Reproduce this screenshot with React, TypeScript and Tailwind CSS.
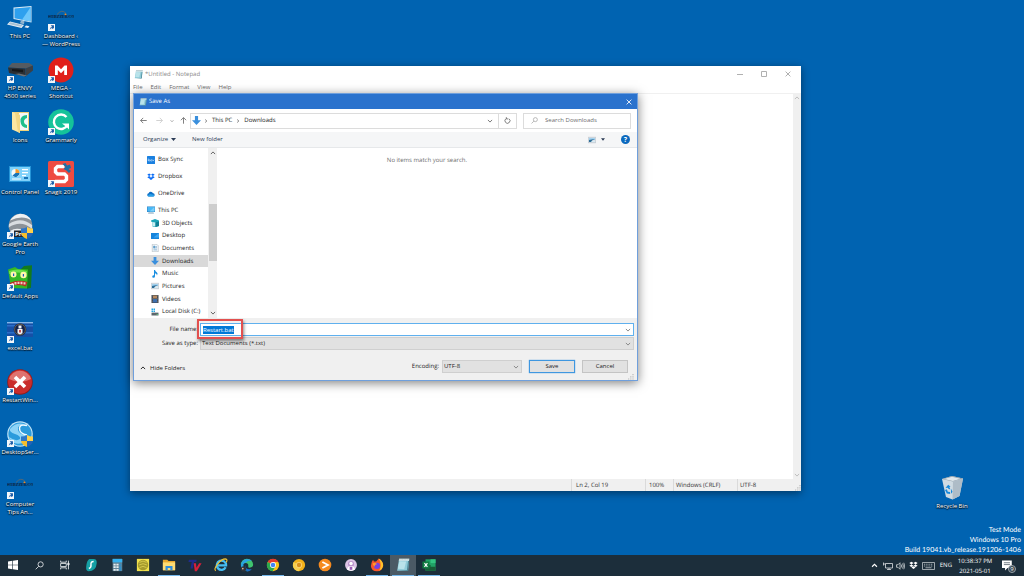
import { useEffect, useRef } from "react";
import type { ReactNode } from "react";

/* ---------- shared small glyphs ---------- */

type GlyphProps = { className?: string };

const Chevron = ({ className = "" }: GlyphProps) => (
  <svg viewBox="0 0 10 10" className={className} fill="none" stroke="currentColor" strokeWidth="1.6">
    <path d="M1.5 3.2 5 6.8 8.5 3.2" />
  </svg>
);

const Caret = ({ className = "" }: GlyphProps) => (
  <svg viewBox="0 0 10 6" className={className} fill="currentColor">
    <path d="M0 0h10L5 6z" />
  </svg>
);

const Cross = ({ className = "" }: GlyphProps) => (
  <svg viewBox="0 0 10 10" className={className} fill="none" stroke="currentColor" strokeWidth="1.4">
    <path d="M1 1l8 8M9 1 1 9" />
  </svg>
);

const Magnifier = ({ className = "" }: GlyphProps) => (
  <svg viewBox="0 0 16 16" className={className} fill="none" stroke="currentColor" strokeWidth="1.5">
    <circle cx="10" cy="6" r="4.6" />
    <path d="M6.6 9.4 1.2 14.8" />
  </svg>
);

const Grip = ({ className = "" }: GlyphProps) => (
  <svg viewBox="0 0 6 6" className={className} fill="#b9b9b9">
    <path d="M4.4 0h1.2v1.2H4.4zM4.4 2.2h1.2v1.2H4.4zM4.4 4.4h1.2v1.2H4.4zM2.2 2.2h1.2v1.2H2.2zM2.2 4.4h1.2v1.2H2.2zM0 4.4h1.2v1.2H0z" />
  </svg>
);

const NotepadIcon = ({ className = "" }: GlyphProps) => (
  <svg viewBox="0 0 18 18" className={className}>
    <path d="M4 1h13l-1.500 15.500H1.500z" fill="#8fcbd8" />
    <path d="M4 1h13l-.3 2.600H3.600z" fill="#d9e6e8" />
    <path d="M4.300 4.200 13 4.500l-2.500 10-8-.6z" fill="#b9e3ea" />
    <path d="M15.500 3.800h1.300L15.500 16.800H4l10-1z" fill="#4b8796" />
    <path d="M4 1h13" stroke="#7c8b8e" strokeWidth="1" strokeDasharray="1 1" />
  </svg>
);

const DownArrow = ({ className = "" }: GlyphProps) => (
  <svg viewBox="0 0 16 16" className={className}>
    <path d="M5.200 0h5.600v7.500H16L8 16 0 7.500h5.200z" fill="#3a8fdc" />
  </svg>
);

const PcIcon = ({ className = "" }: GlyphProps) => (
  <svg viewBox="0 0 16 16" className={className}>
    <path d="M0 1h16v11H0z" fill="#2a7fc0" />
    <path d="M1 2h14v9H1z" fill="#49b7f5" />
    <path d="M15 2v9H5z" fill="#7cd0fa" />
    <path d="M3 13h10l1 2H2z" fill="#7d9db5" />
  </svg>
);

const DropboxIcon = ({ className = "" }: GlyphProps) => (
  <svg viewBox="0 0 16 16" className={className} fill="currentColor">
    <path d="M4.300 1.200.6 3.600l3.700 2.400L8 3.600zM11.700 1.200 8 3.600 11.700 6l3.700-2.400zM.6 8.400l3.700 2.400L8 8.400 4.300 6zM11.700 6 8 8.400l3.700 2.400 3.700-2.400zM4.300 11.600 8 14l3.700-2.400L8 9.200z" />
  </svg>
);

const ShieldIcon = ({ className = "" }: GlyphProps) => (
  <svg viewBox="0 0 12 12" className={className}>
    <path d="M0 1.500Q3.500 1.500 6 0v6H0z" fill="#2e77c8" />
    <path d="M12 1.500Q8.500 1.500 6 0v6h6z" fill="#ffd14a" />
    <path d="M0 6h6v6Q.8 10 0 6z" fill="#f7bf2c" />
    <path d="M12 6H6v6q5.200-2 6-6z" fill="#2563b4" />
  </svg>
);

const PictureIcon = ({ className = "" }: GlyphProps) => (
  <svg viewBox="0 0 16 16" className={className}>
    <path d="M.5 2.500h15v11H.5z" fill="#dde3e8" stroke="#a8b4be" />
    <path d="M2 4h12v4H2z" fill="#a5d2ef" />
    <path d="M2 8l5-1 7-1-6 3-1 3H2z" fill="#2f6f98" />
    <path d="M7 10h7v2H7z" fill="#d6ecf5" />
  </svg>
);

/* ---------- desktop ---------- */

const SiteLogo = () => (
  <svg viewBox="0 0 26 26" className="size-[26px]">
    <path d="M9 9.500q5-6 9-1" fill="none" stroke="#7a6a5c" strokeWidth=".7" />
    <circle cx="17.500" cy="9.500" r="1" fill="#f28a1e" />
    <path d="M0 11h26" stroke="#16385c" strokeWidth=".4" />
    <text x="13" y="13" textAnchor="middle" fontSize="4" fontWeight="700" fontFamily="Liberation Serif, serif" fill="#0d2340">
      WEBZZER.CO
    </text>
  </svg>
);

const DesktopPc = () => (
  <svg viewBox="0 0 26 26" className="size-[26px]">
    <path d="M6.500 2.500 24.500 1v16.500L6.500 14z" fill="#dcebf5" />
    <path d="M7.500 3.400 23.700 2v14.500L7.500 13.200z" fill="#2ea0ee" />
    <path d="M23.700 2v14.500L15 14.800z" fill="#6cc6fb" />
    <path d="m14 15.500 3.500.8-.6 3L13 18.200z" fill="#8fb2cc" />
    <path d="m3 16.500 14 3.500-2.500 3L0 19.500z" fill="#e6eff6" />
    <path d="m3.500 17.300 12 3-1.500 1.500L1.500 19z" fill="#a9c2d4" />
    <path d="m19 20.500 3.500.8-1.500 1.700-3.500-.8z" fill="#e6eff6" />
  </svg>
);

const Printer = () => (
  <svg viewBox="0 0 26 26" className="size-[26px]">
    <path d="M1 10.500 5 6h17l4 2.500-7 3z" fill="#555b61" />
    <path d="m1 10.500 17.500 1v8L2 16z" fill="#2b2f34" />
    <path d="M18.500 11.500 26 8.500v5l-7.500 6z" fill="#3b4046" />
    <path d="m5 12 11 .8v2.400L5 14z" fill="#15181b" />
    <path d="m8 17 9 2.500 3-1-8-2z" fill="#6b7278" />
  </svg>
);

const FolderIcons = () => (
  <svg viewBox="0 0 26 26" className="size-[26px]">
    <path d="M5 3h17v19H9z" fill="#f0d27a" />
    <path d="M12 4h9v17h-9z" fill="#f5f7f7" />
    <path d="M20 6q-7 0-6.500 6.500T20 19v-3q-3-1-3-3.500T20 9z" fill="#1fbf8c" />
    <path d="m5 3 8 3v18l-8-3.500z" fill="#fbe7a3" />
    <path d="m8 4 5 2v18l-2-1z" fill="#f3d783" />
  </svg>
);

const ControlPanel = () => (
  <svg viewBox="0 0 26 26" className="size-[26px]">
    <path d="M2 5h22v16H2z" fill="#2595d8" />
    <path d="M3 6h20v14H3z" fill="#7fd1fa" />
    <circle cx="8.500" cy="12" r="4" fill="#f5fafc" />
    <path d="M8.500 12V8a4 4 0 0 1 4 4z" fill="#f29a2e" />
    <path d="M8.500 12h4a4 4 0 0 1-7 2.600z" fill="#1874b8" />
    <path d="M15 8h6v1.200h-6zM15 11h6v1.200h-6zM15 14h4v1.200h-4zM5 17.500h9v1H5z" fill="#fff" />
    <path d="M17 16h4v2h-4z" fill="#1874b8" />
  </svg>
);

const EarthPro = () => (
  <svg viewBox="0 0 26 26" className="size-[26px]">
    <circle cx="13.500" cy="12.500" r="11.800" fill="#8c9298" />
    <path d="M3 7.500Q7 1.500 13 .8q8 0 11.500 7Q16 1.500 3 7.500z" fill="#eef1f3" />
    <path d="M2 11q12-8 23 1l.2 4Q14 6.500 1.700 14.500z" fill="#d9dde0" />
    <path d="M3 18q9-6 19 3.500l-3 2.300Q14 19 6 21.800z" fill="#eceff1" />
    <path d="M7 17.500h11V24H7z" fill="#23272b" />
    <text x="8" y="22.800" fontSize="6" fontWeight="700" fontFamily="Open Sans, sans-serif" fill="#fff">
      Pro
    </text>
  </svg>
);

const GreenMonster = () => (
  <svg viewBox="0 0 26 26" className="size-[26px]">
    <path d="m14 4 3-3 8-.8-1 22.500-4 1z" fill="#137a1c" />
    <path d="M1 4.500 8 2l3 2 10 .5-1 19-16-.5z" fill="#35b824" />
    <path d="M2 6q8-3 18 0l-.4 3Q11 6 2.200 9z" fill="#6be04a" />
    <circle cx="6.500" cy="9.500" r="3" fill="#fff7ac" />
    <circle cx="16.500" cy="10" r="3.200" fill="#fff7ac" />
    <path d="M6 8.500h1.200v2.500H6zM15.800 9H17v2.500h-1.200z" fill="#1b55c4" />
    <path d="M2.500 18q8.500-4 18-1l-1.500 4.500Q11 19 4 21z" fill="#b92d23" />
    <path d="M4.500 18h2v2h-2zM7.500 17h2v2.400h-2zM10.500 16.700h2v2.400h-2zM13.500 16.700h2v2.600h-2zM16.500 17.200h2v2.400h-2z" fill="#f3c9c4" />
  </svg>
);

const SealFlag = () => (
  <svg viewBox="0 0 26 26" className="size-[26px]">
    <path d="M0 5h26v15H0z" fill="#1650a6" />
    <path d="M0 5h26v1.400H0z" fill="#82b5e8" />
    <path d="M0 8h26v1.500H0zM0 15h26v1.500H0z" fill="#2b6fc8" />
    <circle cx="13" cy="12.500" r="6.300" fill="#13224a" />
    <circle cx="13" cy="12.500" r="5.400" fill="none" stroke="#b89b4b" strokeWidth=".5" />
    <path d="M10.500 12h5v4.200L13 17.500l-2.500-1.300zM11.500 8.500h3v3h-3z" fill="#f3f4f6" />
    <path d="M12.200 13h1.600v2.500h-1.600z" fill="#b82a2a" />
  </svg>
);

const RedCross = () => (
  <svg viewBox="0 0 26 26" className="size-[26px]">
    <circle cx="13" cy="13" r="12.800" fill="#8f1d1d" />
    <circle cx="13" cy="12.800" r="12" fill="#c92d2c" />
    <path d="M2 10a11.500 11.500 0 0 1 22 0q-11 6-22 0z" fill="#df7370" />
    <path d="m8 8 10 10M18 8 8 18" stroke="#fff" strokeWidth="3.600" />
  </svg>
);

const SwirlGlobe = () => (
  <svg viewBox="0 0 26 26" className="size-[26px]">
    <circle cx="13" cy="13" r="12.800" fill="#bfe3f6" />
    <circle cx="13" cy="13" r="11.600" fill="#2b9bdc" />
    <path d="M3 8q6-7 14-5-7 1-6 6 1 4 7 5 3 3-2 8Q5 25 2 16q7 5 11 2 1-3-5-5T3 8z" fill="#8ed4f7" />
    <path d="M20 4.500Q12.500 2.500 12.500 7.500T20 14" fill="none" stroke="#f3fbff" strokeWidth="1.400" />
  </svg>
);

const Mega = () => (
  <svg viewBox="0 0 26 26" className="size-[26px]">
    <circle cx="13" cy="13" r="12.500" fill="#e0201b" />
    <path d="M7 18V8.500h2.500L13 12.300l3.500-3.800H19V18h-2.800v-5L13 16.300 9.800 13v5z" fill="#fff" />
  </svg>
);

const Grammarly = () => (
  <svg viewBox="0 0 26 26" className="size-[26px]">
    <circle cx="13" cy="13" r="12.800" fill="#15c39a" />
    <path d="M18.500 8A7.200 7.200 0 1 0 19.500 16" fill="none" stroke="#fff" strokeWidth="2.400" />
    <path d="M14 14.500h7v6l-2.200-2.200z" fill="#fff" />
  </svg>
);

const Snagit = () => (
  <svg viewBox="0 0 26 26" className="size-[26px]">
    <rect width="26" height="26" rx="1.500" fill="#ee4b42" />
    <path d="M16.500 5.500H9.500L7.500 7.500V11l2 2h7l2 2v3.500l-2 2H7" fill="none" stroke="#fff" strokeWidth="3.400" />
    <path d="m14.500 3 3-1 1.500 2.500 3-1L23 7l-2.500 1 2.500 2-2 2-2.500-2.500L15.500 8l2-2z" fill="#1d6fa6" />
  </svg>
);

const RecycleBin = () => (
  <svg viewBox="0 0 26 26" className="size-[26px]">
    <path d="m3 4 10-3 11 2.500L20.500 21l-7 3.500L7 22z" fill="#cfdbe3" />
    <path d="m3 4 10-3 11 2.500-10 3z" fill="#8f9da8" />
    <path d="m5 4 8-2.300 8.500 2-7.600 2.200z" fill="#dfe7ec" />
    <path d="m14 6.500 10-3L20.500 21l-7 3.500z" fill="#aebcc7" />
    <path d="m6.500 13 2.700-3.200 2.400 2-1.200.2 1 2.400-2-.6-.6-1zM6 15l1.800-.8 1 2.600 2.200.2.200 2-3.400-.4zM12 13.800l1.500 3-1.300 2-.2-1.300z" fill="#1689dc" />
  </svg>
);

type Shortcut = { label: string; icon: ReactNode; linked?: boolean; shield?: boolean };

const firstColumn: Shortcut[] = [
  { label: "This PC", icon: <DesktopPc /> },
  { label: "HP ENVY\n4500 series", icon: <Printer />, linked: true },
  { label: "Icons", icon: <FolderIcons /> },
  { label: "Control Panel", icon: <ControlPanel /> },
  { label: "Google Earth\nPro", icon: <EarthPro />, linked: true, shield: true },
  { label: "Default Apps", icon: <GreenMonster />, linked: true },
  { label: "excel.bat", icon: <SealFlag />, linked: true },
  { label: "RestartWin...", icon: <RedCross />, linked: true },
  { label: "DesktopSer...", icon: <SwirlGlobe />, linked: true, shield: true },
  { label: "Computer\nTips An...", icon: <SiteLogo />, linked: true },
];

const secondColumn: Shortcut[] = [
  { label: "Dashboard ‹\n— WordPress", icon: <SiteLogo />, linked: true },
  { label: "MEGA -\nShortcut", icon: <Mega />, linked: true },
  { label: "Grammarly", icon: <Grammarly />, linked: true },
  { label: "Snagit 2019", icon: <Snagit />, linked: true },
];

function DesktopItem({ label, icon, linked, shield }: Shortcut) {
  return (
    <button type="button" className="flex h-[52px] w-10 flex-col items-center pt-[5px]">
      <span className="relative block size-[26px]">
        {icon}
        {linked && (
          <svg viewBox="0 0 8 8" className="absolute bottom-0 left-0 size-[7px]">
            <path d="M0 0h8v8H0z" fill="#f4f7fa" />
            <path d="M2 6.500Q2 3.500 4.500 3.300V1.800L6.800 4 4.500 6V4.700Q3 4.700 2 6.500z" fill="#1d5ea8" />
            <path d="M3 1.500h3.800v3.800z" fill="#1d5ea8" />
          </svg>
        )}
        {shield && <ShieldIcon className="absolute right-0 bottom-0 size-3" />}
      </span>
      <span className="mt-px text-center leading-2 whitespace-pre text-white [text-shadow:0_1px_1px_#000,0_0_2px_#000]">
        {label}
      </span>
    </button>
  );
}

/* ---------- notepad ---------- */

function Notepad() {
  return (
    <section
      aria-label="Notepad"
      className="absolute top-[66px] left-[130px] flex h-[425px] w-[671px] flex-col bg-white text-[#8a8a8a] shadow-[0_2px_8px_rgba(0,0,0,0.45)]"
    >
      <header className="flex h-4 items-center pr-px pl-1">
        <NotepadIcon className="size-[9px]" />
        <h1 className="ml-[2px] flex-1">*Untitled - Notepad</h1>
        <button type="button" aria-label="Minimize" className="grid w-6 place-items-center text-[#b0b0b0]">
          <svg viewBox="0 0 6 6" className="size-[6px]" stroke="currentColor"><path d="M0 3.500h6" /></svg>
        </button>
        <button type="button" aria-label="Maximize" className="grid w-6 place-items-center text-[#b0b0b0]">
          <svg viewBox="0 0 6 6" className="size-[6px]" fill="none" stroke="currentColor"><path d="M.5.5h5v5h-5z" /></svg>
        </button>
        <button type="button" aria-label="Close" className="grid w-6 place-items-center text-[#a0a0a0]">
          <Cross className="size-[6px]" />
        </button>
      </header>
      <nav className="flex h-[11px] items-center gap-2 pl-[3px] text-[#6b6b6b]">
        {["File", "Edit", "Format", "View", "Help"].map((m) => (
          <button type="button" key={m}>{m}</button>
        ))}
      </nav>
      <div className="flex min-h-0 flex-1 border-t border-[#f0f0f0]">
        <textarea aria-label="Document" className="flex-1 resize-none outline-none" />
        <div className="flex w-2 flex-col items-center justify-between bg-[#f0f0f0] py-px text-[#bcbcbc]">
          <Chevron className="size-[6px] rotate-180" />
          <Chevron className="size-[6px]" />
        </div>
      </div>
      <footer className="flex h-3 items-stretch bg-[#f0f0f0] leading-3 text-[#333]">
        <span className="ml-auto w-[74px] border-l border-[#dadada] pl-1">Ln 2, Col 19</span>
        <span className="w-7 border-l border-[#dadada] pl-[3px]">100%</span>
        <span className="w-16 border-l border-[#dadada] pl-[2px]">Windows (CRLF)</span>
        <span className="w-[58px] border-l border-[#dadada] pl-[2px]">UTF-8</span>
        <Grip className="size-[6px] self-end" />
      </footer>
    </section>
  );
}

/* ---------- save dialog ---------- */

type Place = { label: string; icon: ReactNode };

const cloudPlaces: Place[] = [
  {
    label: "Box Sync",
    icon: (
      <svg viewBox="0 0 16 16" className="size-2">
        <rect width="16" height="16" rx="1" fill="#1a80e0" />
        <g fill="none" stroke="#cfe6fa" strokeWidth="1.200">
          <path d="M2.500 5v4.500" /><circle cx="4.300" cy="8.800" r="1.500" /><circle cx="8.500" cy="8.800" r="1.500" />
          <path d="m11 7.300 3 3M14 7.300l-3 3" />
        </g>
      </svg>
    ),
  },
  { label: "Dropbox", icon: <DropboxIcon className="size-2 text-[#0a6cf5]" /> },
  {
    label: "OneDrive",
    icon: (
      <svg viewBox="0 0 16 16" className="size-2">
        <path d="M3.500 13a3.400 3.400 0 0 1-.3-6.700A4.800 4.800 0 0 1 12 6.500a3.300 3.300 0 0 1 .8 6.500z" fill="#0f6fc6" />
        <path d="m6 8 7.500 1.500q2 2.500-.7 3.500H3.500q-2 0-2.800-1.500z" fill="#28a0e8" />
      </svg>
    ),
  },
];

const pcPlaces: Place[] = [
  {
    label: "3D Objects",
    icon: (
      <svg viewBox="0 0 16 16" className="size-2">
        <path d="M0 3 8 0l8 3v11l-7 2-6-1V6L0 5z" fill="#1aa5b8" />
        <path d="m3 6 6 1v8l-6-1z" fill="#c9eff4" />
        <path d="m9 7 7-2v9l-7 2z" fill="#0f7f95" />
      </svg>
    ),
  },
  {
    label: "Desktop",
    icon: (
      <svg viewBox="0 0 16 16" className="size-2">
        <path d="M0 2h16v12H0z" fill="#1684dc" />
        <path d="M16 2v9H5z" fill="#3aa5f2" />
      </svg>
    ),
  },
  {
    label: "Documents",
    icon: (
      <svg viewBox="0 0 16 16" className="size-2">
        <path d="M2.500.5h9l3 3v12h-12z" fill="#f5f8fa" stroke="#9aa7b1" />
        <path d="M5 4h3v4H5zM9 5h3M9 7h3M5 10h7M5 12h7" fill="#6aa7cf" stroke="#5f9bc6" />
      </svg>
    ),
  },
  { label: "Downloads", icon: <DownArrow className="size-2" /> },
  {
    label: "Music",
    icon: (
      <svg viewBox="0 0 16 16" className="size-2">
        <path d="M6 0h2q.5 3 3.500 4.500T12 11q-.3-3.500-4-4.500v6q0 3-3 3t-2.500-2.500Q3 10.500 6 10.700z" fill="#1c8fe0" />
      </svg>
    ),
  },
  { label: "Pictures", icon: <PictureIcon className="size-2" /> },
  {
    label: "Videos",
    icon: (
      <svg viewBox="0 0 16 16" className="size-2">
        <path d="M1 0h14v16H1z" fill="#3d4248" />
        <path d="M4 1h8v6H4z" fill="#b58a62" /><path d="M4 8h8v7H4z" fill="#3c6fae" />
        <path d="M2.400 0v16M13.600 0v16" stroke="#b8bdc2" strokeWidth=".9" strokeDasharray="1.500 1.500" />
      </svg>
    ),
  },
  {
    label: "Local Disk (C:)",
    icon: (
      <svg viewBox="0 0 16 16" className="size-2">
        <path d="M1 1h3v3H1zM5 1h3v3H5zM1 5h3v3H1zM5 5h3v3H5z" fill="#22a6e4" />
        <path d="M1 9.500h14V15H1z" fill="#5d666d" />
        <path d="M1 9.500 3 8h10l2 1.500z" fill="#b7c0c6" />
        <path d="M11 12h3v1.300h-3z" fill="#55e07c" />
      </svg>
    ),
  },
];

function SaveDialog() {
  const nameRef = useRef<HTMLInputElement>(null);
  useEffect(() => {
    nameRef.current?.focus();
    nameRef.current?.select();
  }, []);

  return (
    <section
      role="dialog"
      aria-label="Save As"
      className="absolute top-[93px] left-[133px] flex h-[288px] w-[505px] flex-col border border-[#6f9fdc] bg-white text-[#222] shadow-[0_2px_10px_rgba(0,0,0,0.5)]"
    >
      <header className="flex h-[15px] items-center bg-[#2a72cd] px-[5px] text-white">
        <NotepadIcon className="size-2" />
        <h2 className="ml-[2px] flex-1">Save As</h2>
        <button type="button" aria-label="Close dialog"><Cross className="size-[6px]" /></button>
      </header>

      <div className="flex h-[23px] items-center pr-[6px] pl-[6px] text-[#777]">
        <button type="button" aria-label="Back">
          <svg viewBox="0 0 12 12" className="size-[7px]" fill="none" stroke="currentColor" strokeWidth="1.600"><path d="M11.500 6H1M5.500 1.500 1 6l4.500 4.500" /></svg>
        </button>
        <button type="button" aria-label="Forward" className="ml-[9px] text-[#cfcfcf]">
          <svg viewBox="0 0 12 12" className="size-[7px]" fill="none" stroke="currentColor" strokeWidth="1.600"><path d="M.5 6H11M6.500 1.500 11 6l-4.500 4.500" /></svg>
        </button>
        <button type="button" aria-label="Recent locations" className="ml-[7px]"><Chevron className="size-1" /></button>
        <button type="button" aria-label="Up one level" className="ml-[6px]">
          <svg viewBox="0 0 12 12" className="size-[7px]" fill="none" stroke="currentColor" strokeWidth="1.600"><path d="M6 11.500V1M1.500 5.500 6 1l4.500 4.500" /></svg>
        </button>
        <div className="ml-[3px] flex h-4 flex-1 items-center border border-[#dcdcdc] pl-px text-[#222]">
          <DownArrow className="size-[9px]" />
          <Chevron className="ml-[3px] size-1 -rotate-90" />
          <span className="ml-1">This PC</span>
          <Chevron className="mx-1 size-1 -rotate-90" />
          <span>Downloads</span>
          <button type="button" aria-label="Previous locations" className="mr-[5px] ml-auto text-[#777]"><Chevron className="size-[6px]" /></button>
          <button type="button" aria-label="Refresh" className="grid h-full w-[18px] place-items-center border-l border-[#dcdcdc]">
            <svg viewBox="0 0 12 12" className="size-[7px]" fill="none" stroke="#666" strokeWidth="1.400"><path d="M8.500 3A4.300 4.300 0 1 1 4 2.600M4 .3v3h3.200" /></svg>
          </button>
        </div>
        <div className="ml-[6px] flex h-4 w-[108px] items-center border border-[#dcdcdc] pl-[7px] text-[#999]">
          <Magnifier className="size-[7px]" />
          <input
            type="search"
            aria-label="Search Downloads"
            placeholder="Search Downloads"
            className="ml-[7px] min-w-0 flex-1 outline-none placeholder:text-[#6d6d6d]"
          />
        </div>
      </div>

      <div className="flex h-4 items-center border-b border-[#e6e8ea] bg-[#f5f6f7] pr-[7px] pl-[9px] text-[#2b3b55]">
        <button type="button" className="flex items-center gap-[3px]">
          Organize <Caret className="h-[3px] w-[5px]" />
        </button>
        <button type="button" className="ml-4">New folder</button>
        <button type="button" aria-label="Change view" className="ml-auto flex items-center gap-[5px]">
          <PictureIcon className="size-2" />
          <Caret className="h-[3px] w-1" />
        </button>
        <button type="button" aria-label="Help" className="ml-4 grid size-[9px] place-items-center rounded-full bg-[#0b69be] text-[7px] leading-none font-bold text-white">
          ?
        </button>
      </div>

      <div className="flex min-h-0 flex-1">
        <nav className="flex w-[74px] flex-col justify-between pt-[3px]">
          <ul>
            {cloudPlaces.map((p) => (
              <li key={p.label} className="flex h-[17px] items-center gap-[3px] pl-[13px]">
                {p.icon}{p.label}
              </li>
            ))}
          </ul>
          <ul className="mt-[2px] flex flex-1 flex-col">
            <li className="flex min-h-0 flex-1 items-center gap-[3px] pl-[13px]">
              <PcIcon className="size-2" />This PC
            </li>
            {pcPlaces.map((p) => (
              <li
                key={p.label}
                className={`flex min-h-0 flex-1 items-center gap-[3px] pl-[17px] whitespace-nowrap ${p.label === "Downloads" ? "bg-[#d9d9d9]" : ""}`}
              >
                {p.icon}{p.label}
              </li>
            ))}
          </ul>
        </nav>
        <div className="flex w-[9px] flex-col items-center bg-[#f0f0f0] pt-[2px] pb-[2px] text-[#606060]">
          <Chevron className="size-[6px] rotate-180" />
          <div className="mt-12 h-[57px] w-2 bg-[#cdcdcd]" />
          <Chevron className="mt-auto size-[6px]" />
        </div>
        <p className="flex-1 pt-2 text-center leading-2 text-[#6d6d6d]">No items match your search.</p>
      </div>

      <form className="flex h-[62px] flex-col bg-[#f0f0f0] pt-[5px] pr-[3px]" onSubmit={(e) => e.preventDefault()}>
        <div className="flex items-center">
          <label htmlFor="name" className="w-[66px] pr-[2px] text-right">File name:</label>
          <div className="flex h-[13px] flex-1 items-center border border-[#5fb0ee] bg-white pr-[2px] pl-[2px]">
            <input
              id="name"
              ref={nameRef}
              defaultValue="Restart.bat"
              className="h-2 min-w-0 flex-1 leading-2 outline-none selection:bg-[#0078d7] selection:text-white"
            />
            <Chevron className="size-[6px] text-[#888]" />
          </div>
        </div>
        <div className="mt-px flex items-center">
          <label htmlFor="type" className="w-[66px] pr-[2px] text-right">Save as type:</label>
          <div className="relative flex h-[13px] flex-1 items-center border border-[#cfcfcf] bg-[#e1e1e1]">
            <select id="type" className="h-full w-full appearance-none pl-px outline-none">
              <option>Text Documents (*.txt)</option>
            </select>
            <Chevron className="pointer-events-none absolute right-[2px] size-[6px] text-[#888]" />
          </div>
        </div>
        <div className="mt-[10px] flex items-center pr-[6px] pl-[6px]">
          <button type="button" className="flex items-center gap-1 pt-[3px]">
            <Chevron className="size-[6px] rotate-180" />Hide Folders
          </button>
          <label htmlFor="encoding" className="ml-auto pr-[3px]">Encoding:</label>
          <div className="relative flex h-[13px] w-[80px] items-center border border-[#cfcfcf] bg-[#e1e1e1]">
            <select id="encoding" className="h-full w-full appearance-none pl-px outline-none">
              <option>UTF-8</option>
            </select>
            <Chevron className="pointer-events-none absolute right-[2px] size-[6px] text-[#888]" />
          </div>
          <button type="submit" className="ml-[7px] h-[13px] w-[46px] border border-[#3f97e0] bg-[#e1e1e1] shadow-[0_0_1px_#3f97e0]">
            Save
          </button>
          <button type="button" className="ml-[7px] h-[13px] w-[46px] border border-[#c4c4c4] bg-[#e1e1e1]">Cancel</button>
        </div>
        <Grip className="mt-auto size-[6px] self-end" />
      </form>

      <div className="pointer-events-none absolute top-[225px] left-[63px] h-[20px] w-[46px] border-2 border-[#e2504f] shadow-[1px_2px_3px_rgba(0,0,0,0.45)]" />
    </section>
  );
}

/* ---------- taskbar ---------- */

type App = { name: string; icon: ReactNode; open?: boolean; active?: boolean };

const taskIcon = "size-[14px]";

const apps: App[] = [
  { name: "Start", icon: <svg viewBox="0 0 16 16" className="size-[10px]" fill="#fff"><path d="M0 2.300 7 1.300v6.200H0zM8 1.200 16 0v7.500H8zM0 8.500h7v6.200l-7-1zM8 8.500h8V16l-8-1.200z" /></svg> },
  { name: "Search", icon: <Magnifier className="size-[9px] text-[#e6e9eb]" /> },
  {
    name: "Task View",
    icon: (
      <svg viewBox="0 0 16 16" className="size-[10px]" fill="none" stroke="#e6e9eb" strokeWidth="1.400">
        <path d="M1 1v2.500h9V1M1 15v-2.500h9V15M1 5.500h9v5H1zM13.500 1v14" /><path d="M12.500 5h2v3h-2z" fill="#e6e9eb" />
      </svg>
    ),
  },
  {
    name: "Surfshark",
    icon: (
      <svg viewBox="0 0 16 16" className={taskIcon}>
        <path d="M6 1h5q4 0 3.500 5Q14 15 5 15q-3 0-2.500-5Q3 3 6 1z" fill="#16a0a5" />
        <path d="M11 4Q7.500 4 8 7.500T5.500 12" fill="none" stroke="#fff" strokeWidth="1.600" />
      </svg>
    ),
  },
  {
    name: "Calculator",
    icon: (
      <svg viewBox="0 0 16 16" className={taskIcon}>
        <path d="M3 1h11v14H3z" fill="#5f8296" /><path d="M3 1h11v4H3z" fill="#35b1ef" />
        <path d="M4 6.500h2.500v2H4zM7.300 6.500h2.500v2H7.300zM4 9.500h2.500v2H4zM7.300 9.500h2.500v2H7.300zM4 12.500h2.500v2H4zM7.300 12.500h2.500v2H7.300z" fill="#e8eef1" />
        <path d="M10.800 6.500H13v2h-2.200zM10.800 9.500H13v5h-2.200z" fill="#2f8fc9" />
      </svg>
    ),
  },
  {
    name: "Notes",
    icon: (
      <svg viewBox="0 0 16 16" className={taskIcon}>
        <path d="M1 1h14v14H1z" fill="#f2e24d" /><circle cx="8" cy="8" r="6" fill="#a69b2c" />
        <path d="M4 5q4-3 8 0M3.500 8q4.500-3 9 0M4 11q4-3 8 0" stroke="#d9cd50" fill="none" />
      </svg>
    ),
  },
  {
    name: "File Explorer",
    open: true,
    icon: (
      <svg viewBox="0 0 16 16" className={taskIcon}>
        <path d="M1 2h5l1.500 1.500H15V14H1z" fill="#e9a92f" /><path d="M1 5h14v9H1z" fill="#ffdc73" />
        <path d="M4 14V9h8v5h-2.500v-2.500h-3V14z" fill="#2f8ddb" />
      </svg>
    ),
  },
  {
    name: "TechSmith",
    icon: (
      <svg viewBox="0 0 16 16" className={taskIcon}>
        <path d="M1 2h9l-.6 2.500H7L5.500 12H2.800l1.500-7.500H.5z" fill="#1e2b8c" />
        <path d="M6.500 6h2.600l.6 5 3-5h2.800L10 15H7.800z" fill="#d5203c" />
      </svg>
    ),
  },
  {
    name: "Internet Explorer",
    icon: (
      <svg viewBox="0 0 16 16" className={taskIcon}>
        <path d="M13.300 10.500A5.300 5.300 0 1 1 13.800 8.300H4.500" fill="none" stroke="#45bdf2" strokeWidth="2.600" />
        <path d="M2 14.500Q-.5 13 4 7q5-6 9-6 3 .500 1 4" fill="none" stroke="#f3c433" strokeWidth="1.300" />
      </svg>
    ),
  },
  {
    name: "Edge",
    icon: (
      <svg viewBox="0 0 16 16" className={taskIcon}>
        <path d="M1 8a7 7 0 0 1 14-.5Q15 11 11 11q-2.500-.3-1.500-2Q9.500 5 5 6 1.500 7 1 8z" fill="#3fc46f" />
        <path d="M1 8Q2 1.500 8 1q4 0 5.500 2.500Q9 2 7 5 3 6 4 9q0 5 6 6Q1 16 1 8z" fill="#28a4e0" />
        <path d="M6 8q0 6 7.500 4.500Q11 16 7.500 14.800 5 12 6 8z" fill="#1a6fc6" />
        <circle cx="4" cy="12.500" r="3" fill="#30343a" /><circle cx="3.200" cy="12" r="1" fill="#d9b08f" />
      </svg>
    ),
  },
  {
    name: "Chrome",
    open: true,
    icon: (
      <svg viewBox="0 0 16 16" className={taskIcon}>
        <circle cx="8" cy="8" r="7" fill="#fbc116" />
        <path d="M8 8 1.900 4.500A7 7 0 0 1 14.100 4.500H8z" fill="#e33b2e" />
        <path d="M8 8 1.900 4.500A7 7 0 0 0 7.500 15L11 9.500z" fill="#2da94f" />
        <circle cx="8" cy="8" r="3.400" fill="#fff" /><circle cx="8" cy="8" r="2.600" fill="#4285f4" />
      </svg>
    ),
  },
  {
    name: "Chrome Canary",
    icon: (
      <svg viewBox="0 0 16 16" className={taskIcon}>
        <circle cx="8" cy="8" r="7" fill="#f3b21a" /><path d="M8 8 1.900 4.500A7 7 0 0 0 7.500 15L11 9.500z" fill="#f8cf4c" />
        <circle cx="8" cy="8" r="3.400" fill="#fbd67a" /><circle cx="8" cy="8" r="2.500" fill="#d8901a" />
      </svg>
    ),
  },
  {
    name: "Media Player",
    icon: (
      <svg viewBox="0 0 16 16" className={taskIcon}>
        <circle cx="8" cy="8" r="7.200" fill="#f58a1f" /><path d="M5 4.500 11.500 8 5 11.500" fill="none" stroke="#fff" strokeWidth="2" />
      </svg>
    ),
  },
  {
    name: "Podcasts",
    icon: (
      <svg viewBox="0 0 16 16" className={taskIcon}>
        <circle cx="8" cy="8" r="6.800" fill="#dcc5e6" /><circle cx="8" cy="6.800" r="3.400" fill="#b98fcc" />
        <circle cx="8" cy="6.300" r="2" fill="#fff" /><path d="M3.500 13q.5-4 4.500-4t4.500 4q-4.500 3-9 0z" fill="#fff" /><path d="M6.500 10h3v3.500h-3z" fill="#9b59b6" />
      </svg>
    ),
  },
  {
    name: "Firefox",
    open: true,
    icon: (
      <svg viewBox="0 0 16 16" className={taskIcon}>
        <path d="M2 4.500 3.500 2l1 2L7 4l3-3.500Q15.500 4 15 9q-1 6-7 6.200Q1.500 15 1 9z" fill="#f8562c" />
        <path d="M10 .5q5.500 3.500 5 8.500-.8 4-4.500 5.500Q14 8 10 .5z" fill="#ffc42b" />
        <circle cx="8" cy="9" r="3.500" fill="#7542e5" /><path d="M3 6q4-1 5 1-3 0-2.500 3Q3 9 3 6z" fill="#ff9b2b" />
      </svg>
    ),
  },
  { name: "Notepad", icon: <NotepadIcon className={taskIcon} />, open: true, active: true },
  {
    name: "Excel",
    open: true,
    icon: (
      <svg viewBox="0 0 16 16" className={taskIcon}>
        <path d="M4 1.500h11.500v13H4z" fill="#21a366" /><path d="M9.800 1.500h5.700v4.300H9.800z" fill="#33c481" />
        <path d="M4 8h5.800v6.500H4zM9.800 10h5.700v4.500H9.800z" fill="#185c37" />
        <path d="M.5 4h8v8h-8z" fill="#107c41" /><path d="m2.800 5.800 3.400 4.400M6.200 5.800l-3.400 4.400" stroke="#fff" strokeWidth="1.300" />
      </svg>
    ),
  },
];

function Taskbar() {
  return (
    <footer className="flex h-[21px] items-stretch justify-between bg-[#1c2e3b] text-white">
      <div className="flex">
        {apps.map((a) => (
          <button
            type="button"
            key={a.name}
            aria-label={a.name}
            className={`flex w-[26px] flex-col items-center px-[2px] ${a.active ? "bg-[#4b5a65]" : ""}`}
          >
            <span className="grid flex-1 place-items-center">{a.icon}</span>
            <span className={`h-px w-full ${a.open ? "bg-[#76b9ed]" : ""}`} />
          </button>
        ))}
      </div>
      <div className="flex items-center pr-[9px]">
        <button type="button" aria-label="Hidden icons"><Chevron className="size-[7px] rotate-180" /></button>
        <svg viewBox="0 0 20 16" className="ml-[5px] h-2 w-[10px]" fill="none" stroke="#e8ebed" strokeWidth="1.500">
          <path d="M5 3h14v9H5zM8 15h8M12 12v3M1 1v6M1 4h4" />
        </svg>
        <svg viewBox="0 0 18 16" className="ml-[3px] h-2 w-[9px]" fill="none" stroke="#e8ebed" strokeWidth="1.400">
          <path d="M1 5.500h3l4-4v13l-4-4H1zM10.500 5q2 3 0 6M13 3q3.500 5 0 10M15.500 1.500q4 6.500 0 13" />
        </svg>
        <DropboxIcon className="ml-1 size-[9px]" />
        <svg viewBox="0 0 26 16" className="ml-1 h-2 w-[13px]" fill="none" stroke="#d5dadd" strokeWidth="1.400">
          <path d="M1 1h24v14H1z" />
          <path d="M4 4.500h18M4 8h18" strokeDasharray="2 1.500" />
          <path d="M7 11.500h12" />
        </svg>
        <span className="ml-[5px]">ENG</span>
        <time className="ml-[5px] w-[36px] text-center leading-[10px] whitespace-nowrap">
          10:38:37 PM<br />2021-05-01
        </time>
        <button type="button" aria-label="9 notifications" className="relative ml-[9px] block h-[13px] w-[13px]">
          <svg viewBox="0 0 18 18" className="size-[11px]">
            <path d="M0 1h16v12H9l-4 4v-4H0z" fill="#fff" />
            <path d="M3 4.500h10M3 7.500h10" stroke="#1c2e3b" />
          </svg>
          <span className="absolute -right-px -bottom-px grid size-2 place-items-center rounded-full border border-[#9aa3a9] bg-[#33424d] leading-none">
            9
          </span>
        </button>
      </div>
    </footer>
  );
}

export default function App() {
  return (
    <div className="flex h-screen flex-col overflow-hidden bg-[#0063b1] font-['Open_Sans','Noto_Sans',sans-serif] text-[6px] font-medium [text-rendering:geometricPrecision]">
      <main className="relative flex flex-1 overflow-hidden">
        <div className="flex gap-px">
          <div className="flex flex-col">{firstColumn.map((s) => <DesktopItem key={s.label} {...s} />)}</div>
          <div className="flex flex-col">{secondColumn.map((s) => <DesktopItem key={s.label} {...s} />)}</div>
        </div>
        <Notepad />
        <SaveDialog />
        <div className="absolute top-[470px] right-[52px]">
          <DesktopItem label="Recycle Bin" icon={<RecycleBin />} />
        </div>
        <p className="absolute right-[3px] bottom-0 text-right font-[Lato,'Noto_Sans',sans-serif] text-[7px] leading-[10px] font-normal text-white">
          Test Mode<br />Windows 10 Pro<br />Build 19041.vb_release.191206-1406
        </p>
      </main>
      <Taskbar />
    </div>
  );
}
